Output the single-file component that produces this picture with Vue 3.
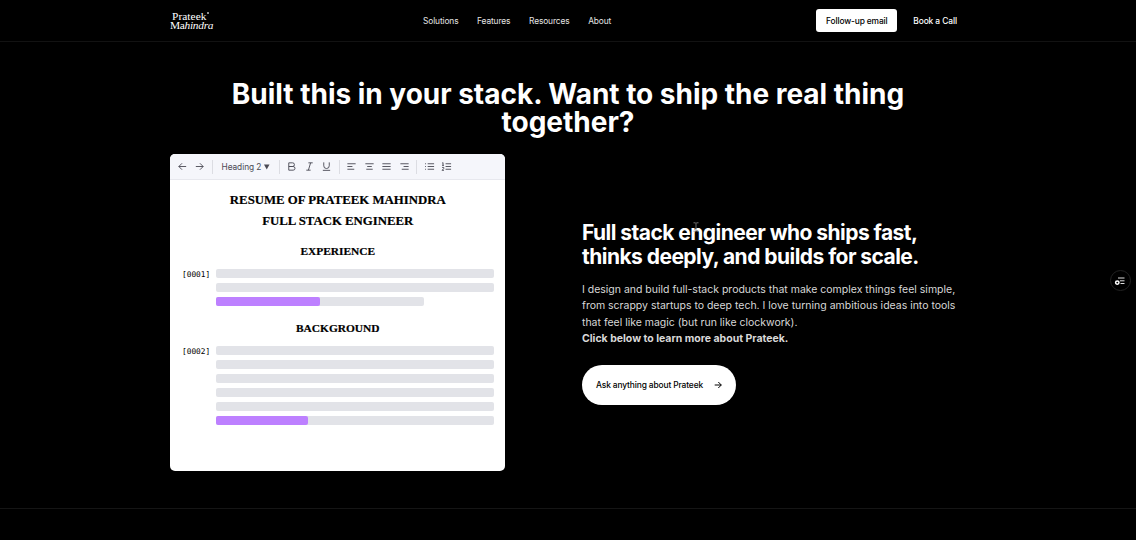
<script setup>
const links = ['Solutions', 'Features', 'Resources', 'About']
const groups = [
  ['M3 2h4.2a2 2 0 0 1 0 4H3zM3 6h4.8a2 2 0 0 1 0 4H3z', 'M4.8 2h4.7M2.5 10h4.7M7.2 2L4.8 10', 'M3 1.5v3.7a3 3 0 0 0 6 0V1.5M2 10.2h8'],
  ['M1.5 3h9M1.5 6h5.5M1.5 9h7.5', 'M1.5 3h9M3.5 6h5M2.5 9h7', 'M1.5 3h9M1.5 6h9M1.5 9h9', 'M1.5 3h9M5 6h5.5M3 9h7.5'],
  ['M4 3h7M4 6h7M4 9h7M1.2 3h1M1.2 6h1M1.2 9h1', 'M5 3h6M5 6h6M5 9h6M1.4 2.2l.8-.5v3M1.2 4.8h2M1.2 7h1.8v1.2l-1.8 2h2'],
]
const sections = [
  { title: 'EXPERIENCE', label: '[0001]', bars: [[100, 0], [100, 0], [75, 50]] },
  { title: 'BACKGROUND', label: '[0002]', bars: [[100, 0], [100, 0], [100, 0], [100, 0], [100, 0], [100, 33.3]] },
]
</script>

<template>
  <div class="page">
    <header class="nav">
      <div class="logo"><span class="first-name">Prateek</span><span>Ma<i>hindra</i></span></div>
      <nav class="links"><a v-for="l in links" :key="l">{{ l }}</a></nav>
      <div class="actions"><button class="follow">Follow-up email</button><a class="book">Book a Call</a></div>
    </header>
    <main>
      <h1>Built this in your stack. Want to ship the real thing together?</h1>
      <div class="columns">
        <section class="card">
          <div class="toolbar">
            <svg class="ic" viewBox="0 0 12 12"><path d="M10 6H2M5.500 2.500L2 6l3.500 3.500" /></svg>
            <svg class="ic" viewBox="0 0 12 12"><path d="M2 6h8M6.500 2.500L10 6 6.500 9.500" /></svg>
            <div class="sep"></div>
            <div class="select"><span>Heading 2</span><svg viewBox="0 0 6 6"><path d="M0 .2h6L3 5.800z" /></svg></div>
            <template v-for="(g, i) in groups" :key="i">
              <div class="sep"></div>
              <svg v-for="d in g" :key="d" class="ic" viewBox="0 0 12 12"><path :d="d" /></svg>
            </template>
          </div>
          <div class="doc">
            <h2>RESUME OF PRATEEK MAHINDRA</h2>
            <h2>FULL STACK ENGINEER</h2>
            <div v-for="s in sections" :key="s.label" class="block">
              <h3>{{ s.title }}</h3>
              <div class="entry">
                <span class="label">{{ s.label }}</span>
                <div class="bars">
                  <div v-for="(b, i) in s.bars" :key="i" class="bar" :style="{ width: b[0] + '%' }">
                    <div v-if="b[1]" class="fill" :style="{ width: b[1] + '%' }"></div>
                  </div>
                </div>
              </div>
            </div>
          </div>
        </section>
        <section class="copy">
          <h2>Full stack engineer who ships fast,<br>thinks deeply, and builds for scale.</h2>
          <p>I design and build full-stack products that make complex things feel simple,<br>from scrappy startups to deep tech. I love turning ambitious ideas into tools<br>that feel like magic (but run like clockwork).<br><b>Click below to learn more about Prateek.</b></p>
          <button class="ask"><span>Ask anything about Prateek</span><svg viewBox="0 0 8 8"><path d="M.7 4h6.600M4.300 1l3 3-3 3" /></svg></button>
          <svg class="cursor" viewBox="0 0 6 10"><path d="M.5.8h1.700l.8.700.8-.700h1.700M3 1.500v7M.5 9.200h1.700l.8-.7.8.7h1.700" /></svg>
        </section>
      </div>
    </main>
    <div class="widget">
      <svg viewBox="0 0 12 10"><path d="M4 2h6.500M6 4.800h4.500M6.500 7.500h4" /><circle cx="3.300" cy="6.600" r="1.700" /></svg>
    </div>
  </div>
</template>

<style>
html, body { margin: 0; background: #000; overflow: hidden; }
</style>

<style scoped>
* { box-sizing: border-box; }
.page { position: relative; width: 1136px; height: 540px; background: #000; color: #fff; font-family: Inter, sans-serif; }
h1, h2, h3, p { margin: 0; }
button { border: 0; font-family: inherit; padding: 0; background: #fff; color: #000; }
svg { display: block; fill: none; stroke: currentColor; }
.nav { height: 42px; border-bottom: 1px solid #121212; padding: 0 179px 0 170px; display: grid; grid-template-columns: 253px 1fr auto; align-items: center; }
.logo { display: flex; flex-direction: column; width: 46px; font: 11.400px/9px "Liberation Serif", serif; letter-spacing: -.3px; padding-top: 1px; }
.logo span { white-space: nowrap; }
.logo .first-name { position: relative; padding-left: 2px; letter-spacing: .05px; }
.first-name::after { content: ""; position: absolute; left: 37px; top: 0; width: 2px; height: 2px; border-radius: 50%; background: #bbb; }
.links { display: flex; gap: 18.600px; font-size: 8.400px; letter-spacing: -.12px; line-height: 14px; color: #e4e4e4; }
.actions { display: flex; align-items: center; gap: 16px; font-size: 8.400px; font-weight: 500; letter-spacing: -.08px; }
.follow { width: 81px; height: 23px; border-radius: 3px; font-size: 8.400px; font-weight: 500; letter-spacing: -.13px; }
main { height: 467px; border-bottom: 1px solid #151515; padding: 38px 170px 0; }
h1 { font-size: 28px; line-height: 28px; font-weight: 700; letter-spacing: -.02px; text-align: center; height: 74px; }
.columns { display: grid; grid-template-columns: 335px 1fr; column-gap: 77px; }
.card { height: 317px; border-radius: 5px; overflow: hidden; background: #fff; color: #000; }
.toolbar { height: 26px; background: #f5f6fb; border-bottom: 1px solid #e7e8ee; display: flex; align-items: center; gap: 6.500px; padding-left: 6.500px; color: #4a4a55; }
.ic { width: 11px; height: 11px; flex: none; stroke-width: 1; }
.sep { width: 1px; height: 14px; background: #dcdde3; flex: none; }
.select { display: flex; align-items: center; gap: 3px; font-size: 8.300px; letter-spacing: -.04px; width: 50.500px; flex: none; white-space: nowrap; margin-left: 2.500px; }
.select svg { width: 5.500px; height: 6px; fill: currentColor; stroke: none; }
.doc { padding: 10px 11.500px 0 12px; }
.doc h2, .doc h3 { font-family: "Liberation Serif", serif; font-weight: 700; text-align: center; -webkit-text-stroke: .2px #000; }
.doc h2 { font-size: 12.800px; line-height: 21px; }
.doc h3 { font-size: 11.400px; line-height: 16px; }
.block { padding-top: 11px; }
.entry { display: flex; padding-top: 9.500px; }
.label { width: 33.500px; flex: none; font: 7.800px/12px "DejaVu Sans Mono", monospace; }
.bars { flex: 1; display: grid; gap: 4.500px; }
.bar { height: 9.500px; border-radius: 2px; background: #e2e3e8; }
.fill { height: 100%; border-radius: 2px; background: #bd80ff; }
.block + .block { padding-top: 14px; }
.copy { position: relative; padding-top: 67px; white-space: nowrap; }
.copy h2 { font-size: 21px; line-height: 23.500px; font-weight: 700; letter-spacing: -.54px; }
.copy p { margin-top: 14px; font-size: 10.500px; line-height: 16.300px; letter-spacing: -.01px; color: #d8d8d8; }
.ask { margin-top: 17.800px; width: 154px; height: 40px; border-radius: 20px; display: flex; align-items: center; justify-content: space-between; padding: 0 14.500px 0 14px; font-size: 8.400px; font-weight: 500; letter-spacing: -.12px; }
.ask svg { width: 8px; height: 8px; }
.cursor { position: absolute; left: 111px; top: 68px; width: 6px; height: 10px; color: #8b8b8b; stroke-width: .8; }
.widget { position: absolute; left: 1110px; top: 270px; width: 21px; height: 21px; border: 1px solid #222; border-radius: 50%; display: grid; place-items: center; color: #ddd; }
.widget svg { width: 12px; height: 10px; stroke-width: 1; margin-left: -1px; }
.widget circle { stroke: #fff; stroke-width: 1.500; }
</style>
